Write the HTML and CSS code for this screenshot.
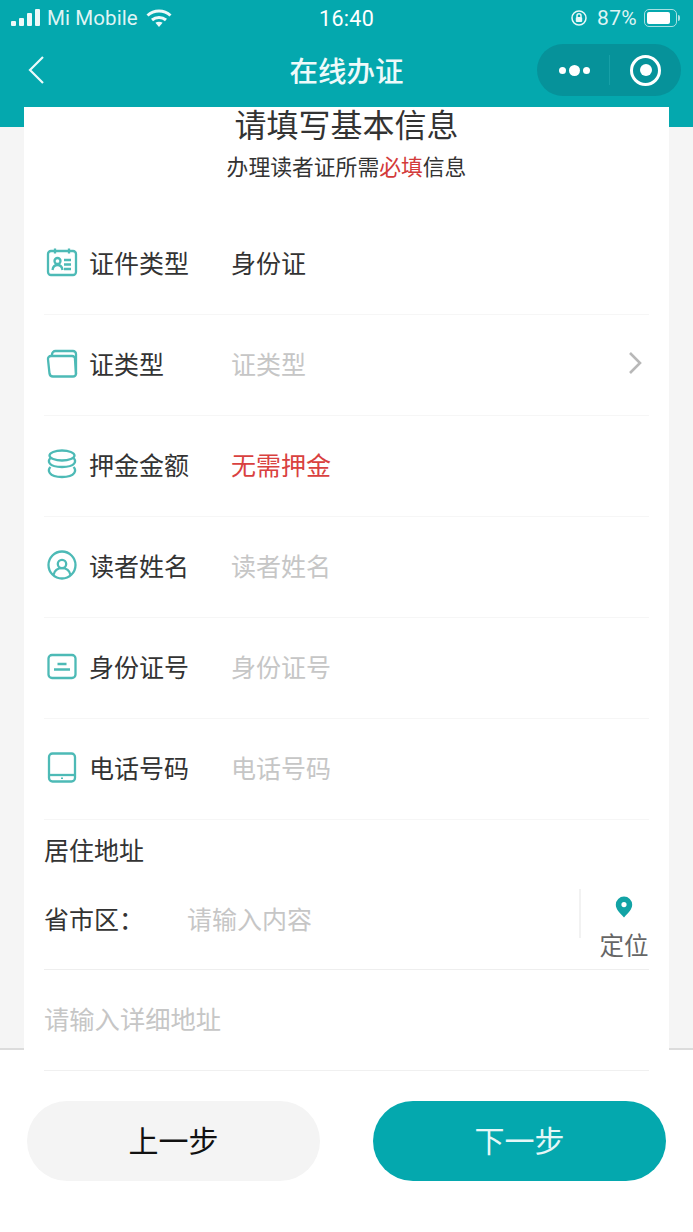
FILE: index.html
```html
<!DOCTYPE html>
<html lang="zh">
<head>
<meta charset="utf-8">
<title>在线办证</title>
<link rel="stylesheet" href="styles.css">
</head>
<body>
<div class="app">
  <header class="top">
    <div class="status">
      <div class="status-left">
        <svg class="signal" viewBox="0 0 30 17"><rect x="0" y="12" width="5" height="5" rx="1"/><rect x="8" y="9" width="5" height="8" rx="1"/><rect x="16" y="4" width="5" height="13" rx="1"/><rect x="24" y="0" width="5" height="17" rx="1"/></svg>
        <span class="carrier">Mi Mobile</span>
        <svg class="wifi" viewBox="0 0 26 18"><path d="M1.5 6.5C8 .5 18 .5 24.500 6.500" /><path d="M6 11c4-3.500 10-3.500 14 0"/><path class="wifi-dot" d="M13 18l-3.600-4.200c2-1.500 5.200-1.500 7.200 0z"/></svg>
      </div>
      <span class="time">16:40</span>
      <div class="status-right">
        <svg class="lock" viewBox="0 0 18 18"><circle cx="9" cy="9" r="7"/><rect class="lock-body" x="5.800" y="8" width="6.400" height="5" rx="1"/><path d="M7 8V6.800a2 2 0 0 1 4 0V8"/></svg>
        <span class="pct">87%</span>
        <div class="battery"><div class="battery-fill"></div></div>
        <div class="battery-nib"></div>
      </div>
    </div>
    <nav class="nav">
      <svg class="back" viewBox="0 0 18 30"><path d="M16 2 3 15l13 13"/></svg>
      <h1 class="nav-title">在线办证</h1>
      <div class="capsule">
        <div class="more"><i class="dot"></i><i class="dot dot-big"></i><i class="dot"></i></div>
        <div class="capsule-line"></div>
        <div class="target"><i class="target-core"></i></div>
      </div>
    </nav>
  </header>

  <main class="card">
    <h2 class="title">请填写基本信息</h2>
    <p class="subtitle">办理读者证所需<em class="must">必填</em>信息</p>

    <div class="rows">
      <div class="row">
        <svg class="ico" viewBox="0 0 32 32"><rect x="2" y="5" width="28" height="24" rx="3"/><path d="M9 2.500v5M23 2.500v5M18 14h7M18 18.500h7M18 23h7"/><circle cx="11.500" cy="15" r="3"/><path d="M6.500 24c.5-3.500 2.500-5 5-5s4.500 1.500 5 5"/></svg>
        <span class="label">证件类型</span>
        <span class="value">身份证</span>
      </div>
      <div class="row">
        <svg class="ico" viewBox="0 0 32 32"><path d="M6 9V7.500A3.500 3.500 0 0 1 9.500 4H27a3 3 0 0 1 3 3v20"/><path d="M5 9h21a3 3 0 0 1 3 3.500L30 27a3 3 0 0 1-3 2.500H7a3.500 3.500 0 0 1-3.500-3L2 12.500A3 3 0 0 1 5 9z"/></svg>
        <span class="label">证类型</span>
        <span class="value placeholder">证类型</span>
        <svg class="chev" viewBox="0 0 14 24"><path d="M2 2l10 10L2 22"/></svg>
      </div>
      <div class="row">
        <svg class="ico" viewBox="0 0 32 32"><ellipse cx="16" cy="7.500" rx="12.500" ry="5"/><path d="M4.500 10c-3 3-2.500 9 11.500 9s14.500-6 11.500-9"/><path d="M4.500 19c-3 3-2.500 10 11.500 10s14.500-7 11.500-10"/></svg>
        <span class="label">押金金额</span>
        <span class="value danger">无需押金</span>
      </div>
      <div class="row">
        <svg class="ico" viewBox="0 0 32 32"><circle cx="16" cy="16" r="13.500"/><circle cx="16" cy="15" r="4.200"/><path d="M7.500 26c1-4.500 4-6.800 8.500-6.800s7.500 2.300 8.500 6.800"/></svg>
        <span class="label">读者姓名</span>
        <span class="value placeholder">读者姓名</span>
      </div>
      <div class="row">
        <svg class="ico" viewBox="0 0 32 32"><rect x="2.500" y="5" width="27" height="23" rx="3.500"/><path d="M11.500 14h9M8 19.500h16"/></svg>
        <span class="label">身份证号</span>
        <span class="value placeholder">身份证号</span>
      </div>
      <div class="row">
        <svg class="ico" viewBox="0 0 32 32"><rect x="3" y="2.500" width="26" height="28" rx="3.500"/><path d="M3 24h26"/><path class="ico-dot" d="M15 26.500h2v1.500h-2z"/></svg>
        <span class="label">电话号码</span>
        <span class="value placeholder">电话号码</span>
      </div>
    </div>

    <section class="address">
      <div class="addr-title">居住地址</div>
      <div class="addr-region">
        <span class="addr-label">省市区：</span>
        <span class="placeholder addr-input">请输入内容</span>
        <div class="locate">
          <svg class="pin" viewBox="0 0 18 22"><path fill-rule="evenodd" d="M9 21.500C5 17 .8 13.500.8 8.800a8.200 8.200 0 0 1 16.400 0C17.200 13.500 13 17 9 21.500zM9 11.200a2.600 2.600 0 1 0 0-5.200 2.600 2.600 0 0 0 0 5.200z"/></svg>
          <span class="locate-text">定位</span>
        </div>
      </div>
      <div class="addr-detail placeholder">请输入详细地址</div>
    </section>
  </main>

  <footer class="bottom">
    <button class="btn btn-prev">上一步</button>
    <button class="btn btn-next">下一步</button>
  </footer>
</div>
</body>
</html>
```

FILE: styles.css
```css
* { box-sizing: border-box; margin: 0; padding: 0; }
html, body { width: 693px; height: 1232px; overflow: hidden; }
body {
  font-family: "Noto Sans CJK SC", "Liberation Sans", sans-serif;
  background: #f5f5f5;
  color: #333;
}
.app { height: 1232px; display: flex; flex-direction: column; overflow: hidden; }

.top { height: 127px; flex: none; background: #04a8ae; color: #fff; }
.status {
  height: 35px; padding: 0 13px 0 11px;
  display: flex; align-items: center; justify-content: space-between;
  position: relative; font-family: Roboto, sans-serif; font-size: 20.500px;
  color: #dff4f4;
}
.status-left { display: flex; align-items: center; }
.signal { width: 30px; height: 17px; fill: #eef9f9; margin-right: 6px; }
.carrier { font-size: 20.500px; letter-spacing: .1px; margin-right: 8px; }
.wifi { width: 26px; height: 18px; fill: none; stroke: #eef9f9; stroke-width: 3; }
.wifi-dot { fill: #eef9f9; stroke: none; }
.time {
  position: absolute; left: 319px; top: 5px; line-height: 27px;
  font-size: 21.500px; letter-spacing: .3px; color: #fff;
}
.status-right { display: flex; align-items: center; }
.lock { width: 18px; height: 18px; fill: none; stroke: #e8f8f8; stroke-width: 1.500; margin-right: 9px; }
.lock-body { fill: #e8f8f8; stroke: none; }
.pct { font-size: 21px; margin-right: 7px; letter-spacing: .3px; }
.battery {
  width: 33px; height: 18px; border: 1.500px solid #a8e0e2; border-radius: 5px; padding: 2px;
}
.battery-fill { width: 85%; height: 100%; background: #fff; border-radius: 2px; }
.battery-nib { width: 2px; height: 6px; background: #a8e0e2; border-radius: 0 2px 2px 0; margin-left: 1px; }

.nav { height: 72px; padding: 9px 12px 0 27px; display: flex; align-items: flex-start; position: relative; }
.back { width: 18px; height: 30px; margin-top: 11px; fill: none; stroke: #eafafa; stroke-width: 2.200; }
.nav-title {
  position: absolute; left: 0; right: 0; top: 9px; text-align: center;
  font-size: 28.500px; line-height: 52px; font-weight: 500; color: #eefafa;
}
.capsule {
  margin-left: auto; width: 144px; height: 52px; border-radius: 26px; background: #06929a;
  display: flex; align-items: center; position: relative;
}
.more { width: 72px; display: flex; align-items: center; justify-content: center; gap: 3px; padding-left: 2px; }
.dot { width: 7px; height: 7px; border-radius: 50%; background: #fff; }
.dot-big { width: 11px; height: 11px; }
.capsule-line { width: 1px; height: 30px; background: #17a0a7; }
.target {
  margin-left: 20px; width: 31px; height: 31px; border: 3.500px solid #fff; border-radius: 50%;
  display: flex; align-items: center; justify-content: center;
}
.target-core { width: 12px; height: 12px; border-radius: 50%; background: #fff; }

.card {
  position: relative; z-index: 1; flex: none;
  margin: -20px 24px 0; height: 966px; background: #fff; padding: 0 20px;
}
.title {
  margin: -2px -20px 0; text-align: center; font-size: 32px; font-weight: 400;
  line-height: 36px; color: #333; height: 36px;
}
.subtitle {
  margin: 9px -20px 0; text-align: center; font-size: 21.800px; line-height: 32px; color: #333;
}
.must { font-style: normal; color: #d33a3a; }

.rows { margin-top: 32px; }
.row {
  height: 101px; display: flex; align-items: center; position: relative; padding: 0 0 5px 2px;
  border-bottom: 1px solid #f6f6f6;
}
.ico {
  width: 32px; height: 32px; flex: none; fill: none; stroke: #4dbab6; stroke-width: 2.300;
  margin-right: 11px;
}
.ico-dot { fill: #4dbab6; stroke: none; }
.label { width: 142px; flex: none; font-size: 25px; color: #333; line-height: 34px; }
.value { font-size: 25px; line-height: 34px; color: #333; }
.placeholder { color: #c6c6c6; }
.danger { color: #d9413f; }
.chev { width: 14px; height: 24px; margin-left: auto; margin-right: 7px; fill: none; stroke: #b8b8b8; stroke-width: 2.600; }

.addr-title { font-size: 25px; line-height: 34px; color: #333; margin-top: 12px; }
.addr-region {
  height: 104px; display: flex; align-items: center;
  border-bottom: 1px solid #eeeeee;
}
.addr-label { width: 143px; font-size: 25px; line-height: 34px; color: #333; flex: none; }
.addr-input { font-size: 25px; line-height: 34px; }
.locate {
  position: relative; align-self: flex-start; flex: none;
  margin-left: auto; margin-top: 23px; width: 70px; height: 80px;
  display: flex; flex-direction: column; align-items: center; padding-left: 20px;
}
.locate::before {
  content: ""; position: absolute; left: 0; top: 0; width: 2px; height: 49px; background: #f2f2f2;
}
.pin { width: 18px; height: 22px; margin-top: 7px; fill: #12a3a5; flex: none; }
.locate-text { font-size: 24.500px; line-height: 34px; color: #666; margin-top: 10px; white-space: nowrap; }
.addr-detail {
  height: 101px; border-bottom: 1px solid #f0f0f0; font-size: 25.300px; line-height: 96px;
}

.bottom {
  flex: none; height: 204px; margin-top: -25px; background: #fff;
  border-top: 2px solid #dcdcdc; padding: 51px 27px 0;
  display: flex; justify-content: space-between; align-items: flex-start;
}
.btn {
  width: 293px; height: 80px; border: 0; border-radius: 40px; padding-bottom: 4px;
  font-family: inherit; font-size: 30px; line-height: 76px;
}
.btn-prev { background: #f4f4f4; color: #111; }
.btn-next { background: #04a8ae; color: #e6f7f7; }
```
